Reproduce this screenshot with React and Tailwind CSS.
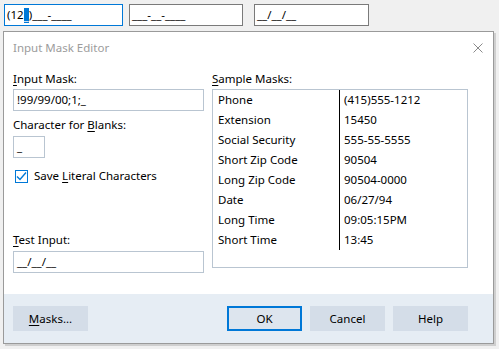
import React from 'react'

const samples = [
  ['Phone', '(415)555-1212'],
  ['Extension', '15450'],
  ['Social Security', '555-55-5555'],
  ['Short Zip Code', '90504'],
  ['Long Zip Code', '90504-0000'],
  ['Date', '06/27/94'],
  ['Long Time', '09:05:15PM'],
  ['Short Time', '13:45'],
]

const Btn = ({ children, active }) => (
  <button
    className={
      active
        ? 'w-[75px] h-[25px] border-2 border-[#0078d7] bg-[#dde5ee] text-[11.5px] text-black'
        : 'w-[75px] h-[25px] bg-[#d4dde8] text-[11.5px] text-black'
    }
  >
    {children}
  </button>
)

const App = () => {
  return (
    <div
      className="w-[499px] h-[349px] bg-[#f0f0f0] overflow-hidden text-[11.5px] leading-[16px] text-black"
      style={{ fontFamily: '"Noto Sans", "Open Sans", sans-serif' }}
    >
      {/* masked inputs on the page */}
      <div className="flex items-start pt-[4px] pl-[4px]">
        <div className="w-[119px] h-[22px] border border-[#0078d7] bg-white pl-[2px] flex items-center">
          <span>(12</span>
          <span className="bg-[#0078d7] text-white leading-[15px]">_</span>
          <span>)___-____</span>
        </div>
        <div className="ml-[6px] w-[114px] h-[22px] border border-[#7a7a7a] bg-white pl-[2px] flex items-center">
          ___-__-____
        </div>
        <div className="ml-[11px] w-[115px] h-[22px] border border-[#7a7a7a] bg-white pl-[2px] flex items-center">
          __/__/__
        </div>
      </div>

      {/* dialog */}
      <div className="mt-[5px] ml-[3px] w-[491px] h-[313px] border border-[#9a9a9a] bg-white flex flex-col shadow-[2px_2px_0_#cfcfcf]">
        <div className="h-[30px] flex items-center justify-between pl-[9px] pr-[9px] pt-[1px]">
          <span className="text-[#9c9c9c]">Input Mask Editor</span>
          <svg width="10" height="10" viewBox="0 0 10 10" className="mr-[1px]">
            <path d="M0.5 0.5 L9.5 9.5 M9.5 0.5 L0.5 9.5" stroke="#8a8a8a" strokeWidth="1" />
          </svg>
        </div>

        <div className="flex-1 flex pt-[9px] pl-[9px]">
          <div className="w-[191px] flex flex-col">
            <div className="h-[16px]">
              <u className="underline-offset-2">I</u>nput Mask:
            </div>
            <div className="mt-[2px] h-[22px] border border-[#b9c5d1] flex items-center pl-[3px]">
              !99/99/00;1;_
            </div>
            <div className="mt-[6px] h-[16px]">
              Character for <u className="underline-offset-2">B</u>lanks:
            </div>
            <div className="mt-[3px] w-[32px] h-[22px] border border-[#b9c5d1] flex items-center pl-[3px]">
              _
            </div>
            <div className="mt-[10px] flex items-center gap-[6px] pl-[2px]">
              <svg width="13" height="13" viewBox="0 0 13 13">
                <rect x="0.5" y="0.5" width="12" height="12" fill="white" stroke="#0078d7" />
                <path d="M2 6.5 L5 9.5 L11 2.5" stroke="#0078d7" strokeWidth="1.4" fill="none" />
              </svg>
              <span>
                Save <u className="underline-offset-2">L</u>iteral Characters
              </span>
            </div>
            <div className="mt-[48px] h-[16px]">
              <u className="underline-offset-2">T</u>est Input:
            </div>
            <div className="mt-[3px] h-[22px] border border-[#b9c5d1] flex items-center pl-[3px]">
              __/__/__
            </div>
          </div>

          <div className="ml-[8px] w-[256px] flex flex-col">
            <div className="h-[16px]">
              <u className="underline-offset-2">S</u>ample Masks:
            </div>
            <div className="mt-[2px] h-[179px] border border-[#b9c5d1]">
              {samples.map(([name, value]) => (
                <div key={name} className="flex h-[20px] items-center">
                  <div className="w-[127px] h-full flex items-center pl-[5px] border-r border-black">
                    {name}
                  </div>
                  <div className="pl-[4px]">{value}</div>
                </div>
              ))}
            </div>
          </div>
        </div>

        <div className="h-[49px] bg-[#e6edf4] flex items-start pt-[12px] pl-[9px] pr-[25px] justify-between">
          <Btn>
            <u className="underline-offset-2">M</u>asks...
          </Btn>
          <div className="flex gap-[8px]">
            <Btn active>OK</Btn>
            <Btn>Cancel</Btn>
            <Btn>Help</Btn>
          </div>
        </div>
      </div>
    </div>
  )
}

export default App
